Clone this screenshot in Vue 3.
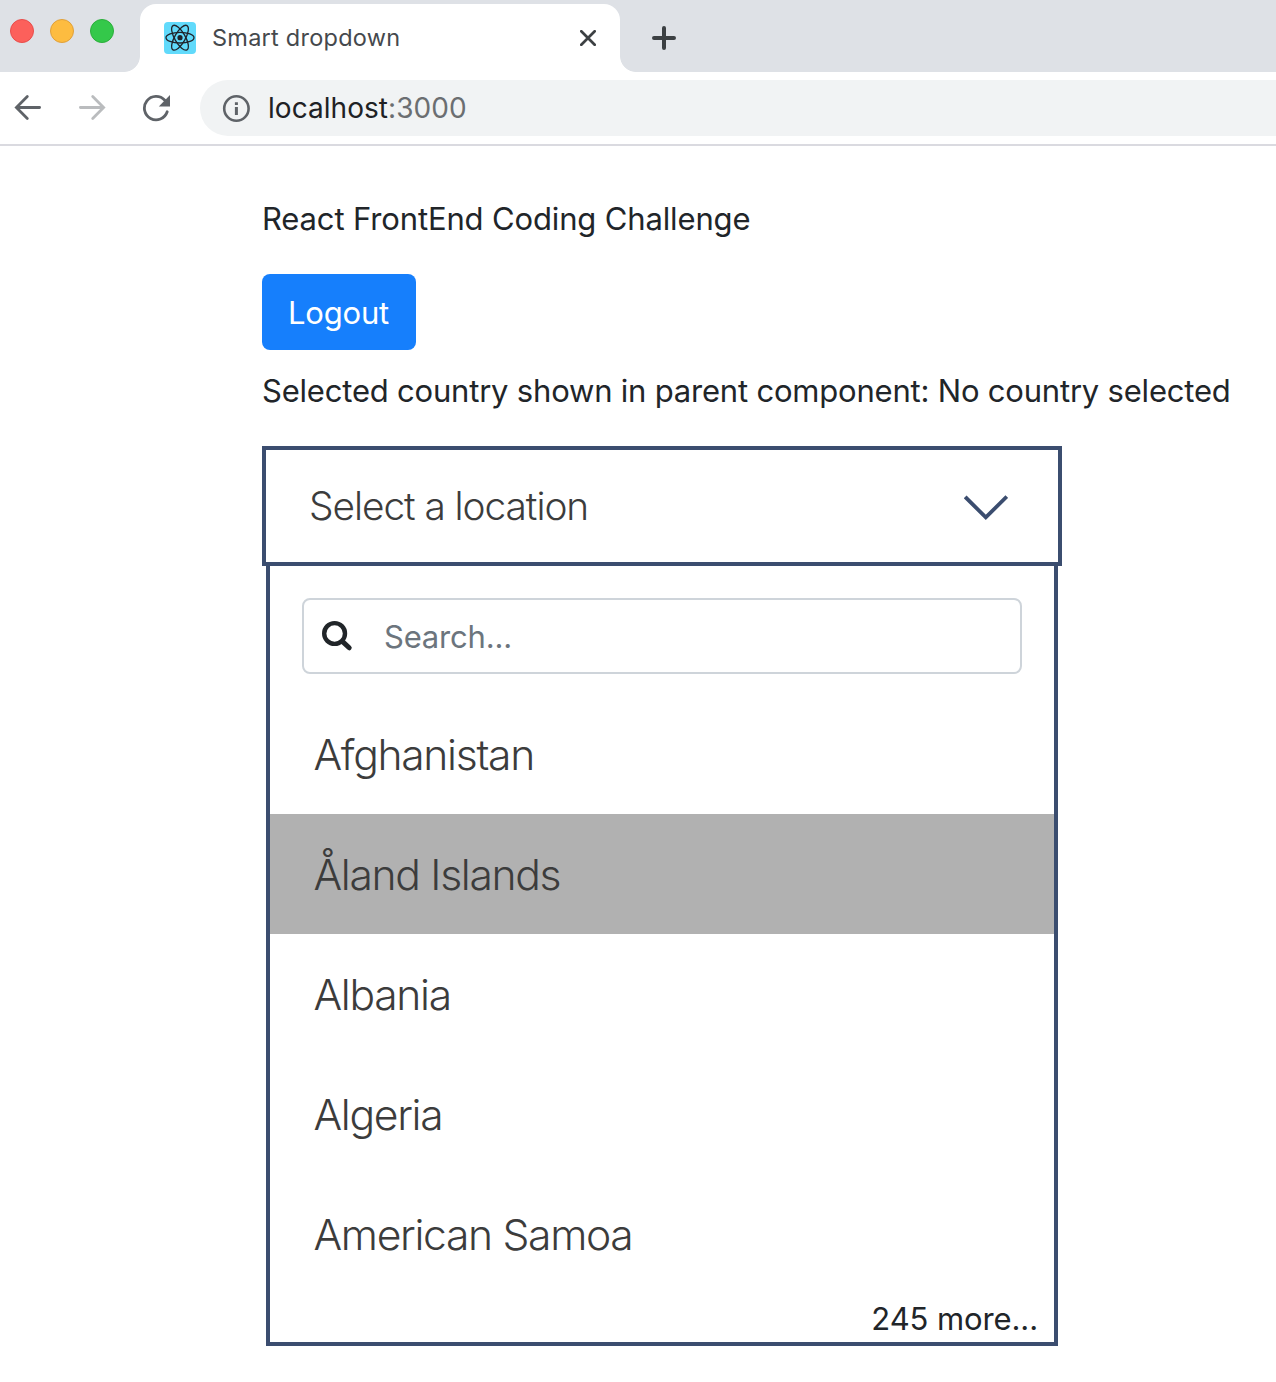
<script setup>
import { ref } from 'vue'

const countries = ['Afghanistan', 'Åland Islands', 'Albania', 'Algeria', 'American Samoa']
const active = ref(1)
const query = ref('')
</script>

<template>
  <div class="window">
    <header class="tabstrip">
      <div class="lights">
        <span class="light red"></span>
        <span class="light yellow"></span>
        <span class="light green"></span>
      </div>
      <div class="tab">
        <svg class="favicon" viewBox="0 0 32 32">
          <rect width="32" height="32" rx="4" fill="#61dafb" />
          <g fill="none" stroke="#20232a" stroke-width="1.3">
            <ellipse cx="16" cy="15.7" rx="14" ry="5.3" />
            <ellipse cx="16" cy="15.7" rx="14" ry="5.3" transform="rotate(60 16 15.7)" />
            <ellipse cx="16" cy="15.7" rx="14" ry="5.3" transform="rotate(120 16 15.7)" />
          </g>
          <circle cx="16" cy="15.7" r="2.6" fill="#20232a" />
        </svg>
        <span class="tab-title">Smart dropdown</span>
        <svg class="close" viewBox="0 0 16 16">
          <path d="M1.3 1.3 14.7 14.7M14.7 1.3 1.3 14.7" fill="none" stroke="#3c4043" stroke-width="2.7" stroke-linecap="round" />
        </svg>
      </div>
      <svg class="plus" viewBox="0 0 24 24">
        <path d="M12 2v20M2 12h20" fill="none" stroke="#3c4043" stroke-width="4" stroke-linecap="round" />
      </svg>
    </header>

    <nav class="toolbar">
      <svg class="nav-icon" viewBox="0 0 28 28">
        <path d="M25.6 13.5H3M13.3 2.6 2.4 13.5 13.3 24.4" fill="none" stroke="#5f6368" stroke-width="2.8" stroke-linecap="round" />
      </svg>
      <svg class="nav-icon" viewBox="0 0 28 28">
        <path d="M2.4 13.5H25M14.7 2.6 25.6 13.5 14.7 24.4" fill="none" stroke="#babcbe" stroke-width="2.8" stroke-linecap="round" />
      </svg>
      <svg class="nav-icon" viewBox="0 0 28 28">
        <path d="M22.8 6.3A11.7 11.7 0 1 0 25.2 17.8" fill="none" stroke="#5f6368" stroke-width="2.8" stroke-linecap="round" />
        <path d="M28 1v11.5H16.8Z" fill="#5f6368" />
      </svg>
      <div class="address">
        <svg class="info" viewBox="0 0 28 28">
          <circle cx="14.4" cy="14.5" r="12.2" fill="none" stroke="#5f6368" stroke-width="2.6" />
          <path d="M12.9 8.2h3v2.8h-3zM12.9 13h3v8h-3z" fill="#5f6368" />
        </svg>
        <span class="url">localhost<span class="port">:3000</span></span>
      </div>
    </nav>

    <main class="page">
      <p class="heading">React FrontEnd Coding Challenge</p>
      <button class="logout" type="button"><span>Logout</span></button>
      <p class="selected">Selected country shown in parent component: No country selected</p>

      <div class="toggle">
        <span class="toggle-text">Select a location</span>
        <svg class="chevron" viewBox="0 0 44 26">
          <path d="M1.2 1.9 21.8 22.4 42.8 1.5" fill="none" stroke="#3b4d6f" stroke-width="3.8" />
        </svg>
      </div>
      <section class="panel">
        <label class="search">
          <svg class="glass" viewBox="0 0 32 32">
            <circle cx="13.6" cy="13.5" r="10.4" fill="none" stroke="#212529" stroke-width="4.4" />
            <path d="M21.6 21.6 28.2 27.8" stroke="#212529" stroke-width="5" stroke-linecap="round" />
          </svg>
          <input v-model="query" type="text" placeholder="Search..." />
        </label>
        <ul class="list">
          <li
            v-for="(name, i) in countries"
            :key="name"
            :class="{ active: i === active }"
            @mouseenter="active = i"
          >{{ name }}</li>
        </ul>
        <div class="more">245 more...</div>
      </section>
    </main>
  </div>
</template>

<style>
body {
  margin: 0;
  background: #fff;
}
</style>

<style scoped>
* {
  box-sizing: border-box;
}
.window {
  width: 1276px;
  height: 1382px;
  overflow: hidden;
  background: #fff;
  color: #212529;
  font-family: Inter, "Noto Sans", sans-serif;
}
svg {
  display: block;
  flex: none;
}
.tabstrip {
  display: flex;
  height: 72px;
  background: #dee1e6;
}
.lights {
  display: flex;
  gap: 16px;
  width: 140px;
  padding: 19px 0 0 10px;
}
.light {
  width: 24px;
  height: 24px;
  border-radius: 50%;
  border: 1px solid;
}
.red {
  background: #fc605b;
  border-color: #e84d4b;
}
.yellow {
  background: #fdbc40;
  border-color: #e0a03a;
}
.green {
  background: #34c84a;
  border-color: #2bae3b;
}
.tab {
  position: relative;
  display: flex;
  align-items: center;
  width: 480px;
  height: 68px;
  margin-top: 4px;
  padding: 0 24px;
  background: #fff;
  border-radius: 16px 16px 0 0;
}
.tab::before,
.tab::after {
  content: "";
  position: absolute;
  bottom: 0;
  width: 16px;
  height: 16px;
}
.tab::before {
  left: -16px;
  background: radial-gradient(circle at 0 0, transparent 15.5px, #fff 16.3px);
}
.tab::after {
  right: -16px;
  background: radial-gradient(circle at 100% 0, transparent 15.5px, #fff 16.3px);
}
.favicon {
  width: 32px;
  height: 32px;
}
.tab-title {
  flex: 1;
  margin-left: 16px;
  font-size: 23.5px;
  line-height: 32px;
  letter-spacing: 0.25px;
  color: #45494d;
}
.close {
  width: 16px;
  height: 16px;
}
.plus {
  width: 24px;
  height: 24px;
  margin: 26px 0 0 32px;
}
.toolbar {
  display: flex;
  align-items: center;
  gap: 36px;
  height: 74px;
  padding-left: 14px;
  border-bottom: 2px solid #dadae0;
}
.nav-icon {
  width: 28px;
  height: 28px;
}
.address {
  display: flex;
  flex: 1;
  align-items: center;
  height: 56px;
  margin-left: -6px;
  padding-left: 22px;
  background: #f1f3f4;
  border-radius: 28px 0 0 28px;
}
.info {
  width: 28px;
  height: 28px;
}
.url {
  margin: 0 0 0 18px;
  font-size: 28px;
  line-height: 40px;
  letter-spacing: 0.05px;
  color: #202124;
}
.port {
  color: #6b6e71;
}
.page {
  padding: 49px 0 0 262px;
}
p {
  margin: 0;
  white-space: nowrap;
  font-size: 31px;
  line-height: 48px;
}
.heading {
  letter-spacing: -0.14px;
}
.selected {
  letter-spacing: -0.2px;
}
.logout {
  display: flex;
  align-items: center;
  justify-content: center;
  width: 154px;
  height: 76px;
  margin: 31px 0 17px;
  padding: 2px 1px 0 0;
  border: 0;
  border-radius: 8px;
  background: #167ffc;
  color: #fff;
  font: 31px/48px Inter, sans-serif;
  letter-spacing: -0.2px;
}
.toggle {
  display: flex;
  align-items: center;
  justify-content: space-between;
  width: 800px;
  height: 120px;
  margin-top: 31px;
  padding: 0 50px 0 43px;
  border: 4px solid #3b4d6f;
  color: #3c3c3c;
  font-size: 38.8px;
  font-weight: 300;
  letter-spacing: -1.04px;
}
.toggle-text {
  margin-top: -2px;
}
.chevron {
  width: 44px;
  height: 26px;
  margin-top: 3px;
}
.panel {
  width: 792px;
  height: 780px;
  margin-left: 4px;
  padding-top: 32px;
  border: 4px solid #3b4d6f;
  border-top: 0;
}
.search {
  display: flex;
  align-items: center;
  width: 720px;
  height: 76px;
  margin-left: 32px;
  padding-left: 17px;
  border: 2px solid #ced4da;
  border-radius: 8px;
}
.glass {
  width: 32px;
  height: 32px;
}
input {
  flex: 1;
  min-width: 0;
  margin: 2px 0 0 31px;
  padding: 0;
  border: 0;
  outline: 0;
  background: transparent;
  font: 31px/48px Inter, sans-serif;
  letter-spacing: -0.2px;
}
input::placeholder {
  color: #6c757d;
  opacity: 1;
}
.list {
  margin: 20px 0 0;
  padding: 0;
  list-style: none;
}
.list li {
  display: flex;
  align-items: center;
  height: 120px;
  padding: 0 0 0 43.5px;
  color: #3c3c3c;
  font-size: 42.6px;
  font-weight: 300;
  letter-spacing: -1.32px;
}
.list li.active {
  background: #b1b1b1;
}
.more {
  padding: 1px 16px 0 0;
  text-align: right;
  font-size: 31px;
  line-height: 48px;
  letter-spacing: -0.1px;
}
</style>
